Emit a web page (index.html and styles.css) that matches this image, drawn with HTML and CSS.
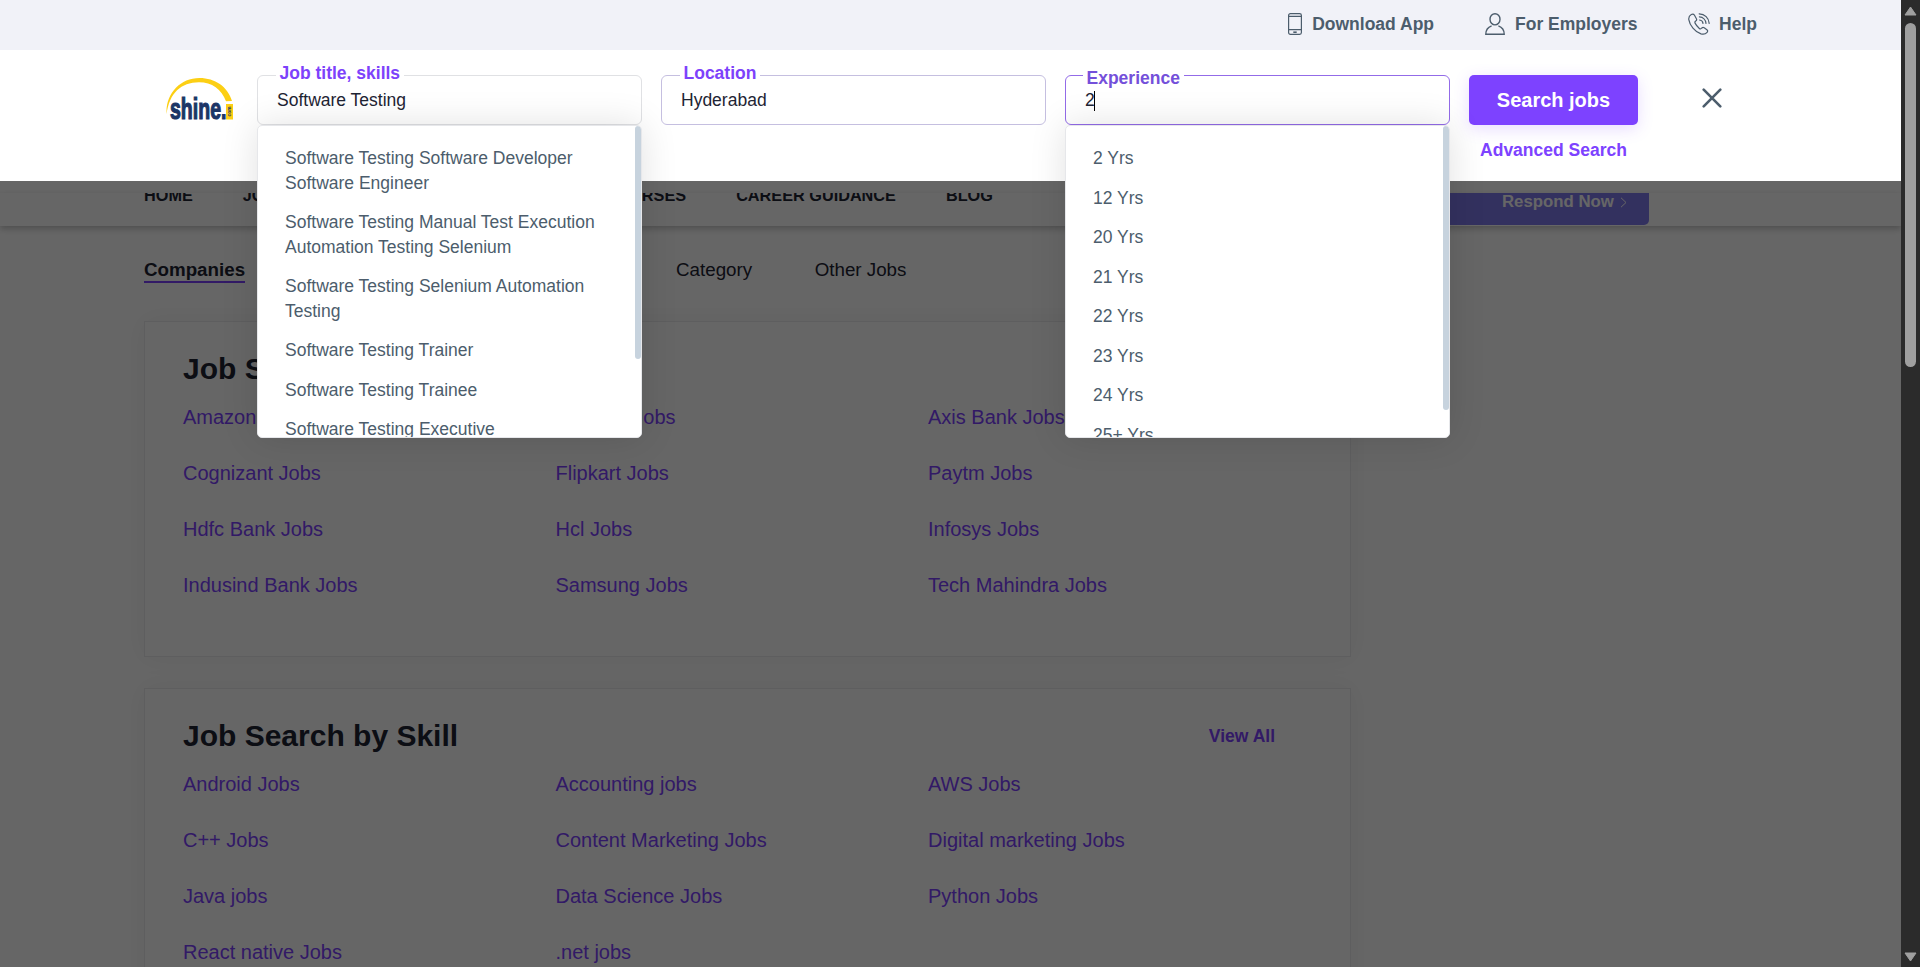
FILE: index.html
```
<!DOCTYPE html>
<html lang="en">
<head>
<meta charset="utf-8">
<title>Shine.com - Job Search</title>
<link rel="stylesheet" href="styles.css">
</head>
<body>
<div class="window">
  <div class="page">
    <header class="masthead">
      <div class="topbar">
        <a class="toplink toplink-app">
          <svg width="14" height="22" viewBox="0 0 14 22" fill="none" stroke="#4c5d6c" stroke-width="1.2"><rect x=".6" y=".6" width="12.8" height="20.8" rx="1.8"/><path d="M.6 3.4h12.8M.6 16.6h12.8"/><path d="M5.3 19.2h3.4" stroke-width="1.6"/></svg>
          <span>Download App</span>
        </a>
        <a class="toplink toplink-emp">
          <svg width="20" height="22" viewBox="0 0 20 22" fill="none" stroke="#4c5d6c" stroke-width="1.4"><ellipse cx="10" cy="6.3" rx="5" ry="5.6"/><path d="M6.6 12.8C3.2 14 .8 17 .8 21.2h18.4c0-4.200-2.400-7.200-5.800-8.400"/></svg>
          <span>For Employers</span>
        </a>
        <a class="toplink toplink-help">
          <svg width="22" height="22" viewBox="0 0 22 22" fill="none" stroke="#4c5d6c" stroke-width="1.2" stroke-linejoin="round" stroke-linecap="round"><path d="M3.300 1.500C1.500 2.500.5 4.300.8 6.600c.8 5.500 6.200 12.300 12.200 14.300 2.500.7 4.600.2 6.100-1.600.8-1 .7-1.900-.2-2.600l-2.700-2c-.9-.6-1.700-.5-2.400.3-.9 1.200-1.600 1.200-2.700.2-1.500-1.300-2.900-3-3.900-4.800-.6-1.100-.4-1.700.5-2.300 1.100-.7 1.200-1.400.7-2.300L6.500 2.200c-.8-1.300-1.800-1.500-3.200-.7z"/><path d="M11.200.8c5.500.2 9.700 4.200 10 9.600M11.400 3.900c3.600.2 6.300 2.900 6.600 6.500M11.600 7c1.900.2 3.200 1.500 3.400 3.400"/></svg>
          <span>Help</span>
        </a>
      </div>
      <div class="searchbar">
        <svg class="logo" width="68" height="47" viewBox="0 0 68 47">
          <path d="M.6 39C-.6 19 14 3 33.500 3 49 3 61.500 11.500 66 26l-6 .2C55.500 14 46 7.200 33 7.200 15 7.200 3.500 18 .6 39z" fill="#fccf14"/>
          <rect x="60" y="29" width="7" height="15.500" fill="#fccf14"/>
          <text class="logo-name" x="4" y="44" textLength="56.500" lengthAdjust="spacingAndGlyphs">shine.</text>
          <text class="logo-com" transform="translate(65.200 41.500) rotate(-90)" textLength="10" lengthAdjust="spacingAndGlyphs">com</text>
        </svg>
        <div class="field">
          <span class="field-label">Job title, skills</span>
          <span class="field-value">Software Testing</span>
          <div class="suggest">
            <ul class="suggest-list">
              <li>Software Testing Software Developer Software Engineer</li>
              <li>Software Testing Manual Test Execution Automation Testing Selenium</li>
              <li>Software Testing Selenium Automation Testing</li>
              <li>Software Testing Trainer</li>
              <li>Software Testing Trainee</li>
              <li>Software Testing Executive</li>
            </ul>
            <i class="suggest-thumb thumb-skills"></i>
          </div>
        </div>
        <div class="field field-location">
          <span class="field-label">Location</span>
          <span class="field-value">Hyderabad</span>
        </div>
        <div class="field field-active">
          <span class="field-label label-moving">Experience</span>
          <span class="field-value">2</span><i class="caret"></i>
          <div class="suggest">
            <ul class="suggest-list">
              <li>2 Yrs</li>
              <li>12 Yrs</li>
              <li>20 Yrs</li>
              <li>21 Yrs</li>
              <li>22 Yrs</li>
              <li>23 Yrs</li>
              <li>24 Yrs</li>
              <li>25+ Yrs</li>
            </ul>
            <i class="suggest-thumb thumb-exp"></i>
          </div>
        </div>
        <div class="actions">
          <button class="search-btn">Search jobs</button>
          <a class="advanced">Advanced Search</a>
        </div>
        <svg class="close" width="20" height="20" viewBox="0 0 20 20" fill="none" stroke="#4c5d6c" stroke-width="2.600" stroke-linecap="round"><path d="M1.700 1.700l16.600 16.600M18.300 1.700L1.700 18.300"/></svg>
      </div>
    </header>
    <div class="backdrop"></div>
    <div class="spacer"></div>
    <nav class="mainnav">
      <div class="mainnav-links">
        <a>HOME</a><a class="nav-jobs">JOBS</a><a>COURSES</a><a>CAREER GUIDANCE</a><a>BLOG</a>
      </div>
      <div class="respond"><span>Respond Now</span><svg width="7" height="11" viewBox="0 0 7 11" fill="none" stroke="#fff" stroke-width="1"><path d="M1 .8l5 4.700-5 4.700"/></svg></div>
    </nav>
    <main class="content">
      <div class="tabs">
        <a class="tab tab-active">Companies</a>
        <a class="tab tab-category">Category</a>
        <a class="tab">Other Jobs</a>
      </div>
      <section class="card">
        <div class="card-head"><h2>Job Search by Company</h2></div>
        <div class="links">
          <a>Amazon Jobs</a><a>Amdocs Jobs</a><a>Axis Bank Jobs</a>
          <a>Cognizant Jobs</a><a>Flipkart Jobs</a><a>Paytm Jobs</a>
          <a>Hdfc Bank Jobs</a><a>Hcl Jobs</a><a>Infosys Jobs</a>
          <a>Indusind Bank Jobs</a><a>Samsung Jobs</a><a>Tech Mahindra Jobs</a>
        </div>
      </section>
      <section class="card">
        <div class="card-head"><h2>Job Search by Skill</h2><a class="view-all">View All</a></div>
        <div class="links">
          <a>Android Jobs</a><a>Accounting jobs</a><a>AWS Jobs</a>
          <a>C++ Jobs</a><a>Content Marketing Jobs</a><a>Digital marketing Jobs</a>
          <a>Java jobs</a><a>Data Science Jobs</a><a>Python Jobs</a>
          <a>React native Jobs</a><a>.net jobs</a>
        </div>
      </section>
    </main>
  </div>
  <div class="scrollbar">
    <svg width="13" height="10" viewBox="0 0 13 10"><path d="M6.500 1L12 9H1z" fill="#9f9f9f" stroke="#9f9f9f" stroke-linejoin="round"/></svg>
    <i class="scroll-thumb"></i>
    <svg class="scroll-down" width="13" height="10" viewBox="0 0 13 10"><path d="M6.500 9L12 1H1z" fill="#9f9f9f" stroke="#9f9f9f" stroke-linejoin="round"/></svg>
  </div>
</div>
</body>
</html>
```
FILE: styles.css
```
* { box-sizing: border-box; }
body {
  margin: 0;
  font-family: "Liberation Sans", Arial, sans-serif;
  font-size: 17.5px;
  color: #1e2433;
  background: #fff;
  overflow: hidden;
}
ul, h2 { margin: 0; padding: 0; }
.window { display: flex; height: 967px; overflow: hidden; }
.page { position: relative; flex: 1; height: 967px; overflow: hidden; background: #fff; }

/* header panel, stays above the dimmed page */
.masthead { position: absolute; inset: 0 0 auto 0; z-index: 3; background: #fff; height: 181px; }
.topbar {
  display: flex;
  justify-content: flex-end;
  height: 50px;
  padding: 13px 144px 0 0;
  background: #f1f2f8;
}
.toplink { display: flex; font-weight: bold; color: #4c5d6c; line-height: 22px; }
.toplink-app { gap: 10.500px; margin-right: 50.500px; }
.toplink-emp { gap: 10.500px; margin-right: 50.500px; }
.toplink-help { gap: 9px; }
.searchbar { display: flex; align-items: flex-start; padding: 25px 0 0 166px; }
.logo { margin-right: 23px; }
.logo-name { font-weight: bold; font-size: 29px; fill: #1c3566; stroke: #1c3566; stroke-width: 1.2px; }
.logo-com { font-weight: bold; font-size: 6px; fill: #1c3566; }
.field {
  position: relative;
  display: flex;
  align-items: center;
  width: 385px;
  height: 50px;
  margin-right: 19px;
  padding: 0 19px;
  border: 1px solid #e0e1e4;
  border-radius: 6px;
}
.field-location { border-color: #c5bfe0; }
.field-active { border-color: #936be8; }
.field-label {
  position: absolute;
  left: 17.500px;
  top: -14px;
  padding: 0 4px;
  background: #fff;
  font-weight: bold;
  line-height: 22px;
  color: #7d42fb;
}
.label-moving { top: -8px; left: 16.500px; line-height: 20px; color: #7450da; background: linear-gradient(#fff, #fff) center/100% 14px no-repeat; }
.field-value { margin-top: 1px; }
.caret { width: 1px; height: 20px; margin: 1px 0 0 -1px; background: #000; }
.suggest {
  position: absolute;
  left: -1px;
  top: 49px;
  width: 385px;
  height: 313px;
  border: 1px solid #e6e7ea;
  border-radius: 5px;
  background: #fff;
  box-shadow: 0 0 37px rgba(0, 0, 0, .12);
  overflow: hidden;
}
.suggest-list { list-style: none; padding: 12.500px 28px 0 27px; color: #4c5d6c; line-height: 24.500px; }
.suggest-list li { padding: 7.500px 0; }
.suggest-thumb { position: absolute; right: 0; top: 0; width: 6px; border-radius: 3px; background: #c7d3de; }
.thumb-skills { height: 233px; }
.thumb-exp { height: 284px; }
.actions { display: flex; flex-direction: column; align-items: center; width: 169px; }
.search-btn {
  width: 169px;
  height: 50px;
  border: 0;
  border-radius: 5px;
  background: #7d42ff;
  color: #fff;
  font: bold 20px "Liberation Sans", Arial, sans-serif;
  box-shadow: 0 4px 16px rgba(125, 66, 255, .18);
}
.advanced { margin-top: 14px; font-weight: bold; color: #7d42ff; line-height: 22px; }
.close { margin: 12.500px 0 0 64px; }

.backdrop { position: absolute; inset: 0; z-index: 2; background: rgba(0, 0, 0, .6); }

/* page under the backdrop */
.spacer { height: 193px; background: #fff; }
.mainnav {
  position: relative;
  display: flex;
  justify-content: space-between;
  height: 33px;
  padding: 0 252px 0 144px;
  background: #fff;
  box-shadow: 0 3px 6px rgba(0, 0, 0, .22);
}
.mainnav-links {
  display: flex;
  gap: 50px;
  height: 33px;
  overflow: hidden;
  font-size: 16.250px;
  font-weight: bold;
  line-height: 18px;
}
.mainnav-links a { margin-top: -7px; white-space: nowrap; }
.nav-jobs { width: 313px; }
.respond {
  display: flex;
  gap: 6px;
  width: 260px;
  height: 32px;
  padding-left: 113px;
  border-radius: 0 0 5px 5px;
  background: #807aee;
  color: #fff;
  font-weight: bold;
  overflow: hidden;
}
.respond span { width: 112px; margin-top: -2px; font-size: 16.800px; line-height: 21px; white-space: nowrap; }
.respond svg { margin-top: 4px; }
.content { padding: 33px 0 0 144px; }
.tabs { display: flex; font-size: 18.750px; line-height: 22px; }
.tab { margin-right: 62.500px; }
.tab-active { height: 24px; margin-right: 431px; font-weight: bold; border-bottom: 2px solid #7d42ff; }
.card {
  width: 1207px;
  height: 336px;
  margin-bottom: 31px;
  padding: 30px 38px;
  border: 1px solid #eceaee;
  box-shadow: 0 0 25px rgba(0, 0, 0, .05);
}
.tabs + .card { margin-top: 38px; }
.card + .card { height: 400px; }
.card-head { display: flex; justify-content: space-between; align-items: center; height: 34px; padding-right: 37px; }
.card-head h2 { font-size: 30px; line-height: 34px; }
.view-all { font-weight: bold; color: #7d42ff; line-height: 20px; }
.links {
  display: grid;
  grid-template-columns: repeat(3, 372.500px);
  grid-auto-rows: 56px;
  margin-top: 3px;
  font-size: 20px;
  line-height: 56px;
  color: #7d42ff;
}

.scrollbar { display: flex; flex-direction: column; align-items: center; width: 19px; padding-top: 6px; background: #2b2b2b; }
.scroll-thumb { width: 11px; height: 344px; margin-top: 7px; border-radius: 6px; background: #9f9f9f; }
.scroll-down { margin: auto 0 5px; }
```
